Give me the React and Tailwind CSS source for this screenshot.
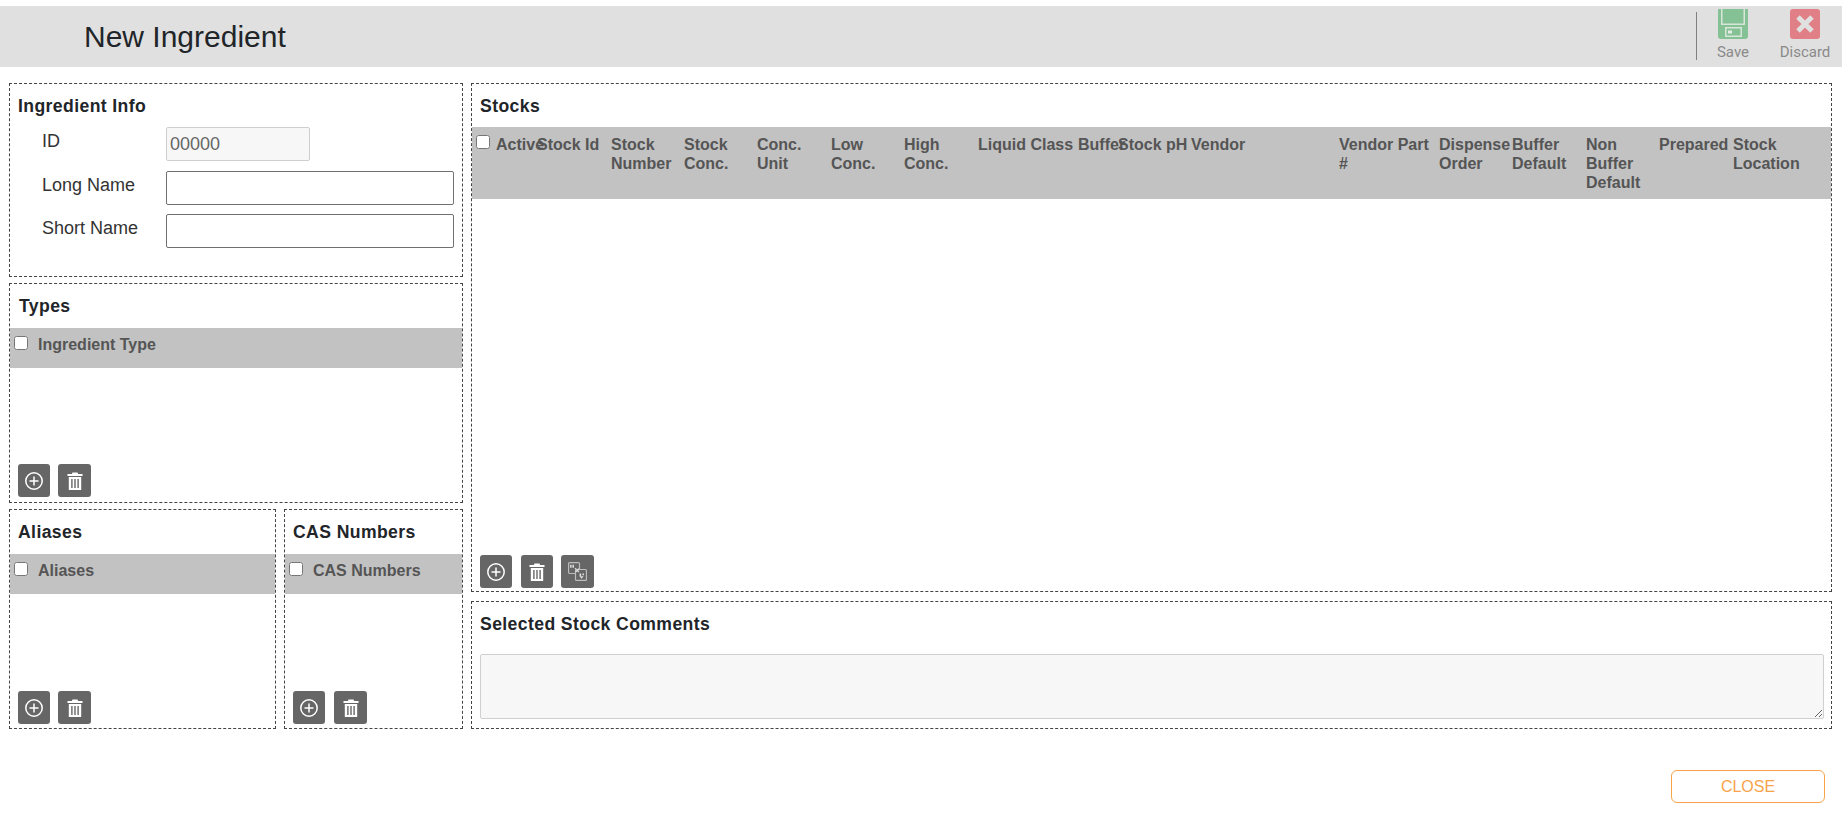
import React from 'react';

// Column starts in the stocks table, taken from the header row
const stockColumns = [
    { label: 'Stock Id', width: 'w-[74px]' },
    { label: 'Stock Number', width: 'w-[73px]' },
    { label: 'Stock Conc.', width: 'w-[73px]' },
    { label: 'Conc. Unit', width: 'w-[74px]' },
    { label: 'Low Conc.', width: 'w-[73px]' },
    { label: 'High Conc.', width: 'w-[74px]' },
    { label: 'Liquid Class', width: 'w-[100px]' },
    { label: 'Buffer', width: 'w-[40px]' },
    { label: 'Stock pH', width: 'w-[73px]' },
    { label: 'Vendor', width: 'w-[148px]' },
    { label: 'Vendor Part #', width: 'w-[100px]' },
    { label: 'Dispense Order', width: 'w-[73px]' },
    { label: 'Buffer Default', width: 'w-[74px]' },
    { label: 'Non Buffer Default', width: 'w-[73px]' },
    { label: 'Prepared', width: 'w-[74px]' },
    { label: 'Stock Location', width: 'w-[90px]' },
];

const PlusIcon = () => (
    <svg width="20" height="20" viewBox="0 0 20 20" fill="none" stroke="white">
        <circle cx="10" cy="10" r="8.2" strokeWidth="1.5" />
        <path d="M10 5.5v9M5.5 10h9" strokeWidth="1.5" />
    </svg>
);

const TrashIcon = () => (
    <svg width="16" height="18" viewBox="0 0 16 18" fill="white">
        <path d="M5.5 0.5h5l.6 1.5H15.5v2H.5V2h4.4z" />
        <path fillRule="evenodd" d="M1.8 5h12.4v13H1.8zM4.2 7v9h1.4V7zM7.3 7v9h1.4V7zM10.4 7v9h1.4V7z" />
    </svg>
);

const SwapIcon = () => (
    <svg width="19" height="19" viewBox="0 0 20 20" fill="none" stroke="#bdbdbd" strokeWidth="1.2">
        <rect x="0.6" y="0.6" width="11.5" height="11.5" rx="1" />
        <rect x="7.9" y="7.9" width="11.5" height="11.5" rx="1" fill="#666666" />
        <path d="M3 3v3M5.5 3v3" strokeWidth="1.6" stroke="#e0e0e0" />
        <path d="M7.5 6.5l1.5 1.5M10 9l1.5 1.5M8 10.5l3.5-3.5" strokeWidth="1.4" stroke="#e0e0e0" />
        <path d="M13 12v3M16 12v2" strokeWidth="1.6" stroke="#e0e0e0" />
        <path d="M12 15h4.5l-2.2 2.6z" fill="#e0e0e0" stroke="none" />
    </svg>
);

const IconButton = ({ children, width = 'w-[32px]', className = '' }) => (
    <button type="button" className={`${width} ${className} h-[33px] rounded-[3px] bg-[#666666] flex items-center justify-center`}>
        {children}
    </button>
);

const Panel = ({ title, className = '', titleClass = 'pl-[6px]', children }) => (
    <section className={`border border-dashed border-[#444444] flex flex-col pt-[12px] ${className}`}>
        <h2 className={`${titleClass} text-[17.6px] leading-[21px] tracking-[0.4px] font-bold text-[#212529]`}>{title}</h2>
        {children}
    </section>
);

const ListPanel = ({ title, header, className, gap = 'gap-[8px]', pad = 'pl-[8px]', bottom = 'mb-[5px]' }) => (
    <Panel title={title} className={className} titleClass={pad}>
        <div className="mt-[11px] h-[40px] bg-[#c2c2c2] flex items-start pl-[4px] pt-[7px]">
            <input type="checkbox" className="w-[14px] h-[14px] mt-[1px]" />
            <span className="ml-[10px] text-[16px] leading-[19px] font-bold text-[#555555]">{header}</span>
        </div>
        <div className={`mt-auto ${bottom} ml-[8px] flex ${gap}`}>
            <IconButton><PlusIcon /></IconButton>
            <IconButton width="w-[33px]"><TrashIcon /></IconButton>
        </div>
    </Panel>
);

const FormRow = ({ label, children }) => (
    <div className="flex items-start">
        <label className="w-[124px] text-[18px] leading-[22px] text-[#333333] pt-[3px]">{label}</label>
        {children}
    </div>
);

export default function App() {
    return (
        <div className="w-[1842px] h-[816px] bg-white font-['Liberation_Sans',sans-serif] overflow-hidden pt-[6px]">
            {/* Header */}
            <header className="h-[61px] bg-[#e0e0e0] flex items-start">
                <h1 className="ml-[84px] mt-[13px] text-[30px] leading-[35px] text-[#212529]">New Ingredient</h1>
                <div className="ml-auto flex items-start">
                    <div className="mt-[6px] w-px h-[48px] bg-[#808080]" />
                    <div className="ml-[20px] w-[32px] flex flex-col items-center font-['Roboto',sans-serif] text-[15px] leading-[16px] text-[#8a8a8a]">
                        <svg width="30" height="30" viewBox="0 0 30 30" className="mt-[3px]">
                            <path d="M0 0h30v27a3 3 0 0 1-3 3H3a3 3 0 0 1-3-3z" fill="#84c194" />
                            <path d="M3.75 0V15.25H26.25V0" fill="none" stroke="#d8e6da" strokeWidth="1.5" />
                            <rect x="7.75" y="18.75" width="15.5" height="8.5" fill="none" stroke="#d8e6da" strokeWidth="1.5" />
                            <rect x="10" y="21.5" width="4" height="3" fill="#e4eee6" />
                        </svg>
                        <span className="mt-[5px]">Save</span>
                    </div>
                    <div className="ml-[31px] mr-[12px] w-[50px] flex flex-col items-center font-['Roboto',sans-serif] text-[15px] leading-[16px] text-[#8a8a8a]">
                        <svg width="30" height="30" viewBox="0 0 30 30" className="mt-[3px]">
                            <rect width="30" height="30" rx="3" fill="#e07f85" />
                            <path d="M8 8l14 14M22 8L8 22" stroke="#e0e0e0" strokeWidth="5" />
                        </svg>
                        <span className="mt-[5px]">Discard</span>
                    </div>
                </div>
            </header>

            <main className="mt-[16px] ml-[9px] flex gap-[8px]">
                {/* Left column */}
                <div className="w-[454px] flex flex-col gap-[6px]">
                    <Panel title="Ingredient Info" className="h-[194px]" titleClass="pl-[8px]">
                        <div className="mt-[10px] pl-[32px] flex flex-col">
                            <FormRow label="ID">
                                <input
                                    disabled
                                    value="00000"
                                    readOnly
                                    className="w-[144px] h-[34px] bg-[#f7f7f7] border border-[#cfcfcf] rounded-[2px] px-[3px] text-[18px] text-[#666666]"
                                />
                            </FormRow>
                            <div className="h-[10px]" />
                            <FormRow label="Long Name">
                                <input className="w-[288px] h-[34px] border border-[#707070] rounded-[2px]" />
                            </FormRow>
                            <div className="h-[9px]" />
                            <FormRow label="Short Name">
                                <input className="w-[288px] h-[34px] border border-[#707070] rounded-[2px]" />
                            </FormRow>
                        </div>
                    </Panel>
                    <ListPanel title="Types" header="Ingredient Type" className="h-[220px]" pad="pl-[9px]" />
                    <div className="h-[220px] flex gap-[8px]">
                        <ListPanel title="Aliases" header="Aliases" className="w-[267px]" bottom="mb-[4px]" />
                        <ListPanel title="CAS Numbers" header="CAS Numbers" className="w-[179px]" gap="gap-[9px]" bottom="mb-[4px]" />
                    </div>
                </div>

                {/* Right column */}
                <div className="w-[1361px] flex flex-col gap-[9px]">
                    <Panel title="Stocks" className="h-[509px]" titleClass="pl-[8px]">
                        <div className="mt-[10px] h-[72px] bg-[#c2c2c2] flex items-start pt-[8px] pl-[4px] text-[16px] leading-[19px] font-bold text-[#555555]">
                            <input type="checkbox" className="w-[14px] h-[14px] shrink-0" />
                            <span className="ml-[6px] w-[41px] shrink-0">Active</span>
                            {stockColumns.map((col) => (
                                <span key={col.label} className={`${col.width} shrink-0`}>{col.label}</span>
                            ))}
                        </div>
                        <div className="mt-auto mb-[3px] ml-[8px] flex gap-[9px]">
                            <IconButton><PlusIcon /></IconButton>
                            <IconButton><TrashIcon /></IconButton>
                            <IconButton width="w-[33px]" className="-ml-[1px]"><SwapIcon /></IconButton>
                        </div>
                    </Panel>
                    <Panel title="Selected Stock Comments" className="h-[128px]" titleClass="pl-[8px]">
                        <textarea className="mt-[19px] ml-[8px] w-[1344px] h-[65px] bg-[#f7f7f7] border border-[#d0d0d0] rounded-[2px]" />
                    </Panel>
                </div>
            </main>

            <div className="mt-[41px] pr-[17px] flex justify-end">
                <button type="button" className="w-[154px] h-[33px] border border-[#f8a34a] rounded-[6px] text-[16px] text-[#f8a34a] bg-white">
                    CLOSE
                </button>
            </div>
        </div>
    );
}
